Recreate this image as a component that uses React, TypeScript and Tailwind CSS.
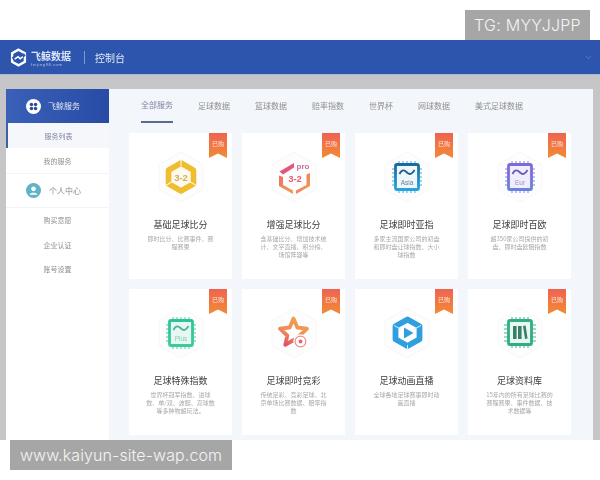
import { ChevronDown } from "lucide-react";
import type { ReactNode } from "react";

const cjk = "font-['Noto_Sans_CJK_SC','Noto_Sans',sans-serif]";

const tabs = ["全部服务", "足球数据", "篮球数据", "赔率指数", "世界杯", "网球数据", "美式足球数据"];

function Halo({ children }: { children: ReactNode }) {
  return (
    <svg viewBox="0 0 56 56" className="h-[56px] w-[56px]">
      <path d="M28 3 L50 15.5 V40.5 L28 53 L6 40.5 V15.5 Z" fill="#fdfdfe" stroke="#f6f7f9" strokeWidth="1" />
      {children}
    </svg>
  );
}

function Chip({ id, top, bottom, tint, wave, label, labelColor }: {
  id: string;
  top: string;
  bottom: string;
  tint: string;
  wave: string;
  label: string;
  labelColor: string;
}) {
  const pins = [20, 24, 28, 32, 36];
  return (
    <Halo>
      <defs>
        <linearGradient id={id} x1="0" y1="0" x2="0" y2="1">
          <stop offset="0" stopColor={top} />
          <stop offset="1" stopColor={bottom} />
        </linearGradient>
      </defs>
      {pins.map((p) => (
        <g key={p} stroke={bottom} strokeWidth="0.9">
          <path d={`M${p} 12 V16`} />
          <path d={`M${p} 40 V44`} />
          <path d={`M13 ${p} H16`} />
          <path d={`M40 ${p} H43`} />
        </g>
      ))}
      <rect x="16.5" y="15.5" width="23" height="25" rx="1.5" fill={tint} stroke={`url(#${id})`} strokeWidth="2.8" />
      <path d="M20.5 25 C23 20 25.5 21 28 23.5 C30.5 26 33 25.5 35.5 21" fill="none" stroke={wave} strokeWidth="1.8" />
      <text x="28" y="36" textAnchor="middle" fontSize="6.5" fill={labelColor} fontFamily="Liberation Sans">
        {label}
      </text>
    </Halo>
  );
}

const icons: ReactNode[] = [
  <Halo key="basic">
    <path d="M28 14 L40.5 21.2 V34.8 L28 42 L15.5 34.8 V21.2 Z" fill="#fffaf0" stroke="#efbd2d" strokeWidth="5.6" strokeLinejoin="round" />
    <path d="M28 10 V17 M42.5 36 L36.5 32.5 M13.5 36 L19.5 32.5" stroke="#fff6d8" strokeWidth="1.1" />
    <text x="28" y="31.5" textAnchor="middle" fontSize="9.5" fontWeight="700" fill="#cfae55" fontFamily="Liberation Sans">3-2</text>
  </Halo>,
  <Halo key="pro">
    <defs>
      <linearGradient id="proRing" x1="0" y1="0" x2="1" y2="1">
        <stop offset="0" stopColor="#ee6f6a" />
        <stop offset="1" stopColor="#f0a050" />
      </linearGradient>
    </defs>
    <path d="M13.5 22.5 L28 14 V18.5 L17 25.5 Z" fill="#e0587c" />
    <path d="M13 26.5 L17 28 V36 L27 41.5 V45 L13 37 Z" fill="url(#proRing)" />
    <path d="M44 24 L40.5 25.5 V36 L30 41.5 V45 L44 37 Z" fill="url(#proRing)" />
    <text x="29" y="33" textAnchor="middle" fontSize="9.5" fontWeight="700" fill="#e2606a" fontFamily="Liberation Sans">3-2</text>
    <text x="37" y="20" textAnchor="middle" fontSize="8" fontWeight="700" fill="#c9709a" fontFamily="Liberation Sans">pro</text>
  </Halo>,
  <Chip key="asia" id="chipAsia" top="#1a6a9c" bottom="#2aa2dc" tint="#eef8fc" wave="#1f5f8c" label="Asia" labelColor="#5c7f95" />,
  <Chip key="eur" id="chipEur" top="#8068d6" bottom="#6c80de" tint="#f1eefc" wave="#6d58c0" label="Eur" labelColor="#9a92c0" />,
  <Chip key="plus" id="chipPlus" top="#2fc29a" bottom="#3ccb9c" tint="#e6f8f1" wave="#52b598" label="Plus" labelColor="#86cdb8" />,
  <Halo key="star">
    <defs>
      <linearGradient id="starEdge" x1="0.7" y1="0" x2="0.2" y2="1">
        <stop offset="0" stopColor="#f0a350" />
        <stop offset="0.6" stopColor="#ee8a58" />
        <stop offset="1" stopColor="#e2506a" />
      </linearGradient>
    </defs>
    <path
      d="M27.5 13.5 L31.3 22.5 L41 23.7 L33.7 30.5 L35.7 39.8 L27.5 35 L19.3 39.8 L21.3 30.5 L14 23.7 L23.7 22.5 Z"
      fill="#fff"
      stroke="url(#starEdge)"
      strokeWidth="3.8"
      strokeLinejoin="round"
    />
    <circle cx="34.5" cy="36.5" r="7.2" fill="#fff" />
    <circle cx="34.5" cy="36.5" r="5.4" fill="#fff" stroke="#ec8a8a" strokeWidth="1.1" />
    <path d="M34.5 34.2 L36.6 35.8 L35.8 38.3 L33.2 38.3 L32.4 35.8 Z" fill="#e8606a" />
  </Halo>,
  <Halo key="video">
    <path d="M28.5 14.5 L40.5 21.3 V34.2 L28.5 41 L16.5 34.2 V21.3 Z" fill="#fff" stroke="#2f9fe0" strokeWidth="5.8" strokeLinejoin="round" />
    <path d="M15 20.5 L22.5 24.5 M42 20.5 L34.5 24.5 M28.5 40 V45" stroke="#d6eefb" strokeWidth="1" />
    <path d="M25 22.5 L34.5 28 L25 33.5 Z" fill="#2f9fe0" />
  </Halo>,
  <Halo key="library">
    {[20, 24, 28, 32, 36].map((p) => (
      <g key={p} stroke="#2fae86" strokeWidth="0.9">
        <path d={`M${p} 12 V16`} />
        <path d={`M${p} 39 V43`} />
        <path d={`M12 ${p} H16`} />
        <path d={`M40 ${p} H44`} />
      </g>
    ))}
    <rect x="16.5" y="15.5" width="23" height="24" rx="1.5" fill="#eaf6f1" stroke="#2fae86" strokeWidth="2.8" />
    <rect x="21" y="21" width="3.6" height="13" fill="#3a7f6a" />
    <rect x="26" y="21" width="3.6" height="13" fill="#3a7f6a" />
    <path d="M31 21 L33.6 20.6 L35.6 33.6 L33 34 Z" fill="#3a7f6a" />
  </Halo>,
];

const services = [
  { title: "基础足球比分", desc: ["即时比分、比赛事件、赛", "程赛果"] },
  { title: "增强足球比分", desc: ["含基础比分、增加技术统", "计、文字直播、积分榜、", "场馆阵容等"] },
  { title: "足球即时亚指", desc: ["多家主流国家公司的初盘", "和即时盘让球指数、大小", "球指数"] },
  { title: "足球即时百欧", desc: ["超350家公司提供的初", "盘、即时盘欧赔指数"] },
  { title: "足球特殊指数", desc: ["世界杯冠军指数、进球", "数、单/双、波胆、高球数", "等多种物超玩法。"] },
  { title: "足球即时竞彩", desc: ["传统足彩、竞彩足球、北", "京单场比赛数据、赔率指", "数"] },
  { title: "足球动画直播", desc: ["全球各地足球赛事即时动", "画直播"] },
  { title: "足球资料库", desc: ["15年内的所有足球比赛的", "赛程赛果、事件数据、技", "术数据等"] },
];

function ServiceCard({ title, desc, icon }: { title: string; desc: string[]; icon: ReactNode }) {
  return (
    <div className="relative flex h-[146px] flex-col items-center bg-white pt-4">
      <span className="absolute top-0 right-[5px] flex h-[25px] w-[18px] justify-center bg-gradient-to-b from-[#ee6350] to-[#f28a30] pt-[7px] text-[6px] leading-[8px] text-[#ffe3d6] [clip-path:polygon(0_0,100%_0,100%_100%,50%_82%,0_100%)]">
        已购
      </span>
      {icon}
      <h3 className="mt-[13px] text-[9px] leading-[13px] font-normal text-[#3c3c3c]">{title}</h3>
      <div className="mt-[4px] flex flex-col items-center text-[6px] leading-[8px] text-[#a8a8a8]">
        {desc.map((line) => (
          <span key={line}>{line}</span>
        ))}
      </div>
    </div>
  );
}

function SideLink({ label, className = "" }: { label: string; className?: string }) {
  return (
    <div className={`flex h-[25px] items-center justify-center text-[7px] text-[#8f8f8f] ${className}`}>{label}</div>
  );
}

export default function App() {
  return (
    <div className={`relative h-[480px] w-[600px] overflow-hidden bg-white pt-10 ${cjk}`}>
      <header className="flex h-[34px] items-center bg-[#2d55ae] pr-[7px] pl-[10px] text-[#dfe7f6] blur-[0.4px]">
        <svg viewBox="0 0 20 22" className="h-[19px] w-[17px]">
          <path d="M10 1.8 L17.5 6 V16 L10 20.2 L2.5 16 V6 Z" fill="none" stroke="#fff" strokeWidth="2.8" />
          <path d="M3 12.5 L9 8.5 L12 11.5 L17.5 7.5" fill="none" stroke="#2d55ae" strokeWidth="3.4" />
          <path d="M5.5 13 L9.5 10 L12 12.5 L15 10" fill="none" stroke="#fff" strokeWidth="1.8" />
        </svg>
        <div className="mt-[2px] ml-1 flex flex-col">
          <span className="text-[10px] leading-[11px] font-bold">飞鲸数据</span>
          <span className="mt-px font-['Liberation_Sans'] text-[4px] leading-[5px] tracking-[0.6px] text-[#b8c8e8]">feijing98.com</span>
        </div>
        <span className="mr-[10px] ml-[13px] h-[13px] w-px bg-[#7f9bd6]" />
        <span className="text-[10px]">控制台</span>
        <ChevronDown className="ml-auto h-[9px] w-[9px] text-[#5f8ade]" />
      </header>

      <div className="flex h-[366px] border-t border-[#a9b6d6] bg-[#c6c6c9] pt-[14px] pr-[7px] pl-[6px] blur-[0.4px]">
        <aside className="w-[103px] bg-white">
          <div className="flex h-[34px] items-center gap-[7px] bg-gradient-to-r from-[#3a60b8] to-[#284ca5] pl-[20px] text-[8px] text-[#dfe7f6]">
            <svg viewBox="0 0 16 16" className="h-[15px] w-[15px]">
              <circle cx="8" cy="8" r="8" fill="#fff" />
              <g fill="#2d4f9e">
                <circle cx="5.8" cy="5.8" r="1.9" />
                <circle cx="10.2" cy="5.8" r="1.9" />
                <circle cx="5.8" cy="10.2" r="1.9" />
                <circle cx="10.2" cy="10.2" r="1.9" />
              </g>
            </svg>
            飞鲸服务
          </div>
          <SideLink label="服务列表" className="border-l-2 border-[#3f5fa8] bg-[#f5f7fa] pt-px !text-[#7f86a4]" />
          <SideLink label="我的服务" className="pt-px" />
          <div className="flex h-[35px] items-center gap-[8px] border-y border-[#f2f3f5] pl-[20px] text-[8px] text-[#8a8a8a]">
            <svg viewBox="0 0 16 16" className="h-[15px] w-[15px]">
              <circle cx="8" cy="8" r="8" fill="#5fb3c4" />
              <circle cx="8" cy="6.2" r="2.5" fill="#fff" />
              <path d="M3.8 12.4 C4.4 9.8 11.6 9.8 12.2 12.4 Z" fill="#fff" />
            </svg>
            个人中心
          </div>
          <SideLink label="购买意愿" />
          <SideLink label="企业认证" />
          <SideLink label="账号设置" className="-mt-px" />
        </aside>

        <main className="flex-1 bg-[#f3f6fa]">
          <nav className="ml-[32px] flex h-[34px] gap-[25px] text-[8px] text-[#8f8f8f]">
            {tabs.map((tab, i) => (
              <span
                key={tab}
                className={`flex items-center ${i === 0 ? "border-b-2 border-[#5a6a90] text-[#7f86a4]" : ""}`}
              >
                {tab}
              </span>
            ))}
          </nav>
          <div className="grid grid-cols-[repeat(4,103px)] gap-x-[10px] gap-y-[10px] pt-[10px] pl-[20px]">
            {services.map((s, i) => (
              <ServiceCard key={s.title} title={s.title} desc={s.desc} icon={icons[i]} />
            ))}
          </div>
        </main>
      </div>

      <div className="absolute top-[10px] left-[465px] flex h-[30px] w-[125px] items-center justify-center bg-[#a6a6a6] font-['Inter',sans-serif] text-base font-light tracking-[0.25px] text-[#f4f4f4]">
        TG: MYYJJPP
      </div>
      <div className="absolute top-[440px] left-[10px] flex h-[30px] w-[222px] items-center justify-center bg-[#a6a6a6] font-['Inter',sans-serif] text-base font-light tracking-[0.1px] text-[#f4f4f4]">
        www.kaiyun-site-wap.com
      </div>
    </div>
  );
}
